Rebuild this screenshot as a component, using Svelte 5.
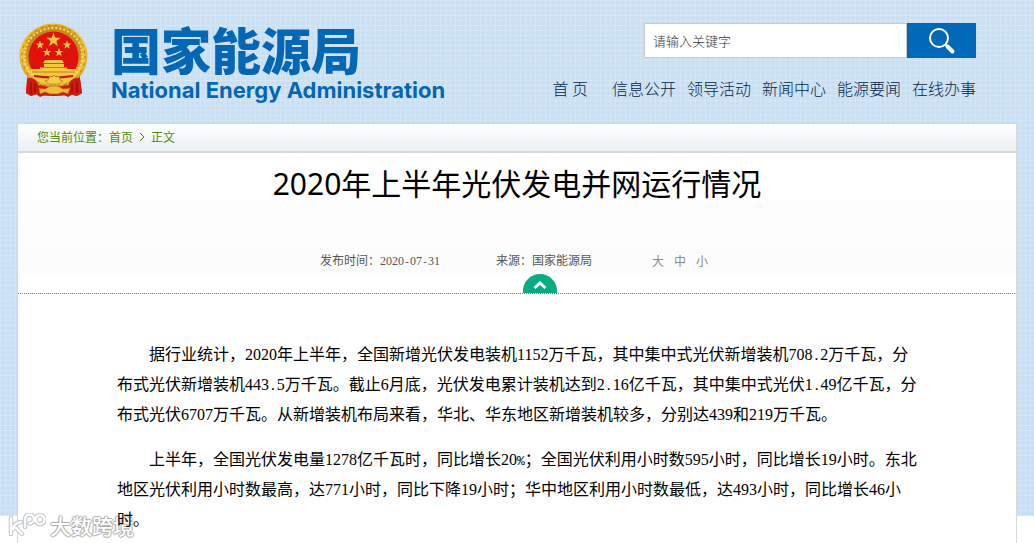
<script>
  const links = ['信息公开', '领导活动', '新闻中心', '能源要闻', '在线办事'];
  const sizes = ['大', '中', '小'];
  const paragraphs = [
    '据行业统计，2020年上半年，全国新增光伏发电装机1152万千瓦，其中集中式光伏新增装机708.2万千瓦，分布式光伏新增装机443.5万千瓦。截止6月底，光伏发电累计装机达到2.16亿千瓦，其中集中式光伏1.49亿千瓦，分布式光伏6707万千瓦。从新增装机布局来看，华北、华东地区新增装机较多，分别达439和219万千瓦。',
    '上半年，全国光伏发电量1278亿千瓦时，同比增长20%；全国光伏利用小时数595小时，同比增长19小时。东北地区光伏利用小时数最高，达771小时，同比下降19小时；华中地区利用小时数最低，达493小时，同比增长46小时。'
  ];
  // Full stops and percent signs are set in half-width cells.
  const split = (text) => text.split(/([.%])/);
  let keyword = $state('');
</script>

<div class="page">
  <header>
    <a class="brand" href="#home">
      <svg class="emblem" viewBox="0 0 70 75" aria-hidden="true">
        <defs>
          <radialGradient id="gold" cx="50%" cy="45%" r="55%">
            <stop offset="0.7" stop-color="#c9891a" />
            <stop offset="0.84" stop-color="#f3c73c" />
            <stop offset="1" stop-color="#d0921d" />
          </radialGradient>
          <path id="star" d="M0-6 1.4-1.9 5.7-1.9 2.3.7 3.5 4.9 0 2.4-3.5 4.9-2.3.7-5.7-1.9-1.4-1.9Z" />
        </defs>
        <path d="M9 48 7 70 12 73 17 71 21 74 28 71 35 73 43 71 49 74 54 71 58 73 63 70 60 48Z" fill="#d3190e" />
        <ellipse cx="34.500" cy="33" rx="34" ry="32.500" fill="url(#gold)" />
        <ellipse cx="34.500" cy="33" rx="29" ry="28" fill="none" stroke="#f8d968" stroke-width="2" stroke-dasharray="2 2" />
        <ellipse cx="34.500" cy="33" rx="31.500" ry="30.500" fill="none" stroke="#b57a18" stroke-width="1" stroke-dasharray="3 4" />
        <path d="M8 56q6-3 11 4l-1 11-6 2-5-3ZM61 56q-6-3-11 4l1 11 6 2 6-3Z" fill="#d3190e" />
        <path d="M12 59v12M16 60v10M53 60v10M58 59v11" stroke="#8e0d08" stroke-width="1.2" />
        <ellipse cx="34.500" cy="34" rx="25" ry="25.500" fill="#e0130c" />
        <g fill="#f6c93f">
          <use href="#star" transform="translate(34.500 17) scale(1.25)" />
          <use href="#star" transform="translate(21 22) scale(.75)" />
          <use href="#star" transform="translate(48 22) scale(.75)" />
          <use href="#star" transform="translate(28 29.500) scale(.75)" />
          <use href="#star" transform="translate(40 29.500) scale(.75)" />
          <path d="M26 37h17l2 3H24ZM25 41h20v3h3v3H21v-3h4ZM12 46h45v5H12Z" />
          <path d="M13 51h43l-5 7q-16 5-33 0Z" />
        </g>
        <path d="M25 40.500h19M22 44.500h26M13 49h43" stroke="#b96a0c" stroke-width=".8" />
        <path d="M15 53q19 3 39 0" stroke="#c01a0c" stroke-width="2" fill="none" />
        <path d="m29 57 2-4 2 1 2-2 2 2 3-1 1 4 3 1-4 3H30l-4-3Z" fill="#f4cc4b" stroke="#b87313" stroke-width=".7" />
        <path d="M21 62q13 4 27 0l1 10q-14 2-29 0Z" fill="#d3190e" />
        <path d="M20 65l6 1 5-3h8l5 3 7-1-2 6-5-2-5 2h-8l-5-2-5 2Z" fill="#efbd36" stroke="#a85d0d" stroke-width=".6" />
      </svg>
      <span class="names">
        <strong lang="zh">国家能源局</strong>
        <span class="latin">National Energy Administration</span>
      </span>
    </a>
    <div class="tools">
      <form onsubmit={(e) => e.preventDefault()}>
        <input type="text" aria-label="请输入关键字" placeholder="请输入关键字" bind:value={keyword} />
        <button class="go" type="submit" aria-label="搜索">
          <svg viewBox="0 0 28 28" aria-hidden="true">
            <circle cx="11" cy="11" r="9" fill="none" stroke="#fff" stroke-width="2" />
            <path d="m17 17 2 2" stroke="#fff" stroke-width="2" />
            <path d="m19.500 19.500 5 5" stroke="#fff" stroke-width="4" stroke-linecap="round" />
          </svg>
        </button>
      </form>
      <nav>
        <a class="first" href="#home">首 页</a>
        {#each links as link}<a href="#{link}">{link}</a>{/each}
      </nav>
    </div>
  </header>

  <main>
    <div class="crumbs">
      <span>您当前位置：</span><a href="#home">首页</a>
      <svg viewBox="0 0 6 10" aria-hidden="true"><path d="m1 1 4 4-4 4" fill="none" stroke="#4d8a0b" /></svg>
      <span>正文</span>
    </div>
    <div class="heading">
      <h1>2020年上半年光伏发电并网运行情况</h1>
      <div class="meta">
        <span class="date">发布时间：<time datetime="2020-07-31">2020<i>-</i>07<i>-</i>31</time></span>
        <span class="source">来源：国家能源局</span>
        <span class="sizes">{#each sizes as size}<button type="button">{size}</button>{/each}</span>
      </div>
      <button class="fold" type="button" aria-label="收起">
        <svg viewBox="0 0 34 19" aria-hidden="true">
          <path d="M0 19v-2a17 17 0 0 1 34 0v2Z" fill="#08ac82" />
          <path d="m11.500 14 5.500-5 5.500 5" fill="none" stroke="#fff" stroke-width="3" />
        </svg>
      </button>
    </div>
    <article>
      {#each paragraphs as text}
        <p>{#each split(text) as part}{#if part === '.' || part === '%'}<span class="half">{part}</span>{:else}{part}{/if}{/each}</p>
      {/each}
    </article>
  </main>

  <div class="mark">
    <svg viewBox="0 0 38 25" aria-hidden="true">
      <defs>
        <path id="loops" d="M3 5v16M13 9Q6 10 5 16M8 15l6 6M17 14V6a4.500 4.500 0 1 1 4.500 4.500M32 2a4.500 4.500 0 1 0 .1 0" />
      </defs>
      <g fill="none" stroke-linecap="round" stroke-linejoin="round">
        <use href="#loops" stroke="#bfc4c8" stroke-width="4.500" />
        <use href="#loops" stroke="#fff" stroke-width="2.500" />
      </g>
    </svg>
    <span>大数跨境</span>
  </div>
</div>

<style>
  :global(body) { margin: 0; background: #fff; }
  .page {
    position: relative;
    isolation: isolate;
    overflow: hidden;
    font-family: "Noto Sans CJK SC", sans-serif;
  }
  .page::before {
    content: "";
    position: absolute;
    z-index: -1;
    inset: 0 0 auto;
    height: 516px;
    background:
      repeating-linear-gradient(90deg, #ffffff2e 0 1px, transparent 1px 5px),
      repeating-linear-gradient(#ffffff2e 0 1px, transparent 1px 5px),
      linear-gradient(#cbdff2, #c6dff6);
  }
  a { color: inherit; text-decoration: none; }
  button { border: 0; padding: 0; background: none; font: inherit; color: inherit; cursor: pointer; }
  svg { display: block; }
  header {
    display: flex;
    justify-content: space-between;
    align-items: flex-start;
    padding: 23px 58px 0 19px;
    height: 100px;
  }
  .brand { display: flex; gap: 22px; color: #0367b6; }
  .emblem { width: 70px; height: 75px; }
  .names { display: flex; flex-direction: column; white-space: nowrap; }
  .names strong { font-size: 50px; line-height: 50px; font-weight: 900; }
  .latin { padding-top: 4px; font: 700 22px/26px Inter, sans-serif; }
  .tools { display: flex; flex-direction: column; align-items: flex-end; gap: 18px; }
  form { display: flex; height: 35px; }
  input {
    box-sizing: border-box;
    width: 263px;
    padding: 0 8px;
    border: 1px solid #c8c8c8;
    border-radius: 0;
    background: #fff;
    color: #555;
    font: 300 13px "Noto Sans CJK SC", sans-serif;
  }
  input::placeholder { color: #333; opacity: 1; }
  .go { display: grid; place-items: center; width: 69px; background: #0068b7; }
  .go svg { width: 28px; height: 28px; }
  nav { display: flex; gap: 11px; font-size: 16px; line-height: 24px; font-weight: 300; color: #00264d; white-space: nowrap; }
  .first { margin-right: 13px; }
  main { margin: 0 17px; background: #fff; border: 1px solid #d5d7d9; border-bottom: 0; }
  .crumbs {
    display: flex;
    align-items: center;
    box-sizing: border-box;
    height: 29px;
    padding: 0 19px 2px;
    border-bottom: 2px solid #d5d7d9;
    background: linear-gradient(#fff, #ebf0f4);
    font-size: 12px;
    line-height: 16px;
    color: #4d8a0b;
  }
  .crumbs svg { width: 6px; height: 10px; margin: 0 6px; }
  .heading {
    display: flex;
    flex-direction: column;
    padding-bottom: 1px;
    background:
      repeating-linear-gradient(90deg, #08ac82 0 1px, transparent 1px 2px) bottom / 100% 1px no-repeat,
      linear-gradient(#fff, #fcfcfc 85%, #fff 85%);
  }
  h1 { margin: 9px 0 0; text-align: center; font: 400 30px/44px "Noto Sans", "Noto Sans CJK SC", sans-serif; color: #000; }
  .meta { display: flex; justify-content: center; margin: 44px 0 0; font-size: 12px; line-height: 20px; color: #555; padding-right: 6px; }
  time { font-family: "Liberation Serif", serif; }
  time i { font: 10px/1 "Liberation Mono", monospace; }
  .source { margin: 0 56px; }
  .sizes { display: flex; gap: 10px; margin-left: 4px; color: #888; }
  .fold { align-self: center; margin: 3px 0 0 46px; }
  .fold svg { width: 34px; height: 19px; }
  article {
    position: relative;
    z-index: 1;
    max-width: 800px;
    margin: 0 auto;
    padding: 46px 0 8px;
    font: 400 16px/30px "Liberation Serif", "Noto Sans CJK SC", serif;
    color: #000;
  }
  p { margin: 0 0 15px; text-indent: 32px; }
  p:last-child { margin-bottom: 0; }
  .half { font: 13px/1 "Liberation Mono", monospace; }
  .mark {
    position: absolute;
    left: 8px;
    top: 510px;
    display: flex;
    align-items: center;
    gap: 4px;
    font-size: 21px;
    line-height: 30px;
    font-weight: 500;
    color: #fff;
    text-shadow: 1px 0 1px #aaa, -1px 0 1px #aaa, 0 1px 1px #aaa, 0 -1px 1px #aaa;
  }
  .mark svg { width: 38px; height: 25px; }
</style>
